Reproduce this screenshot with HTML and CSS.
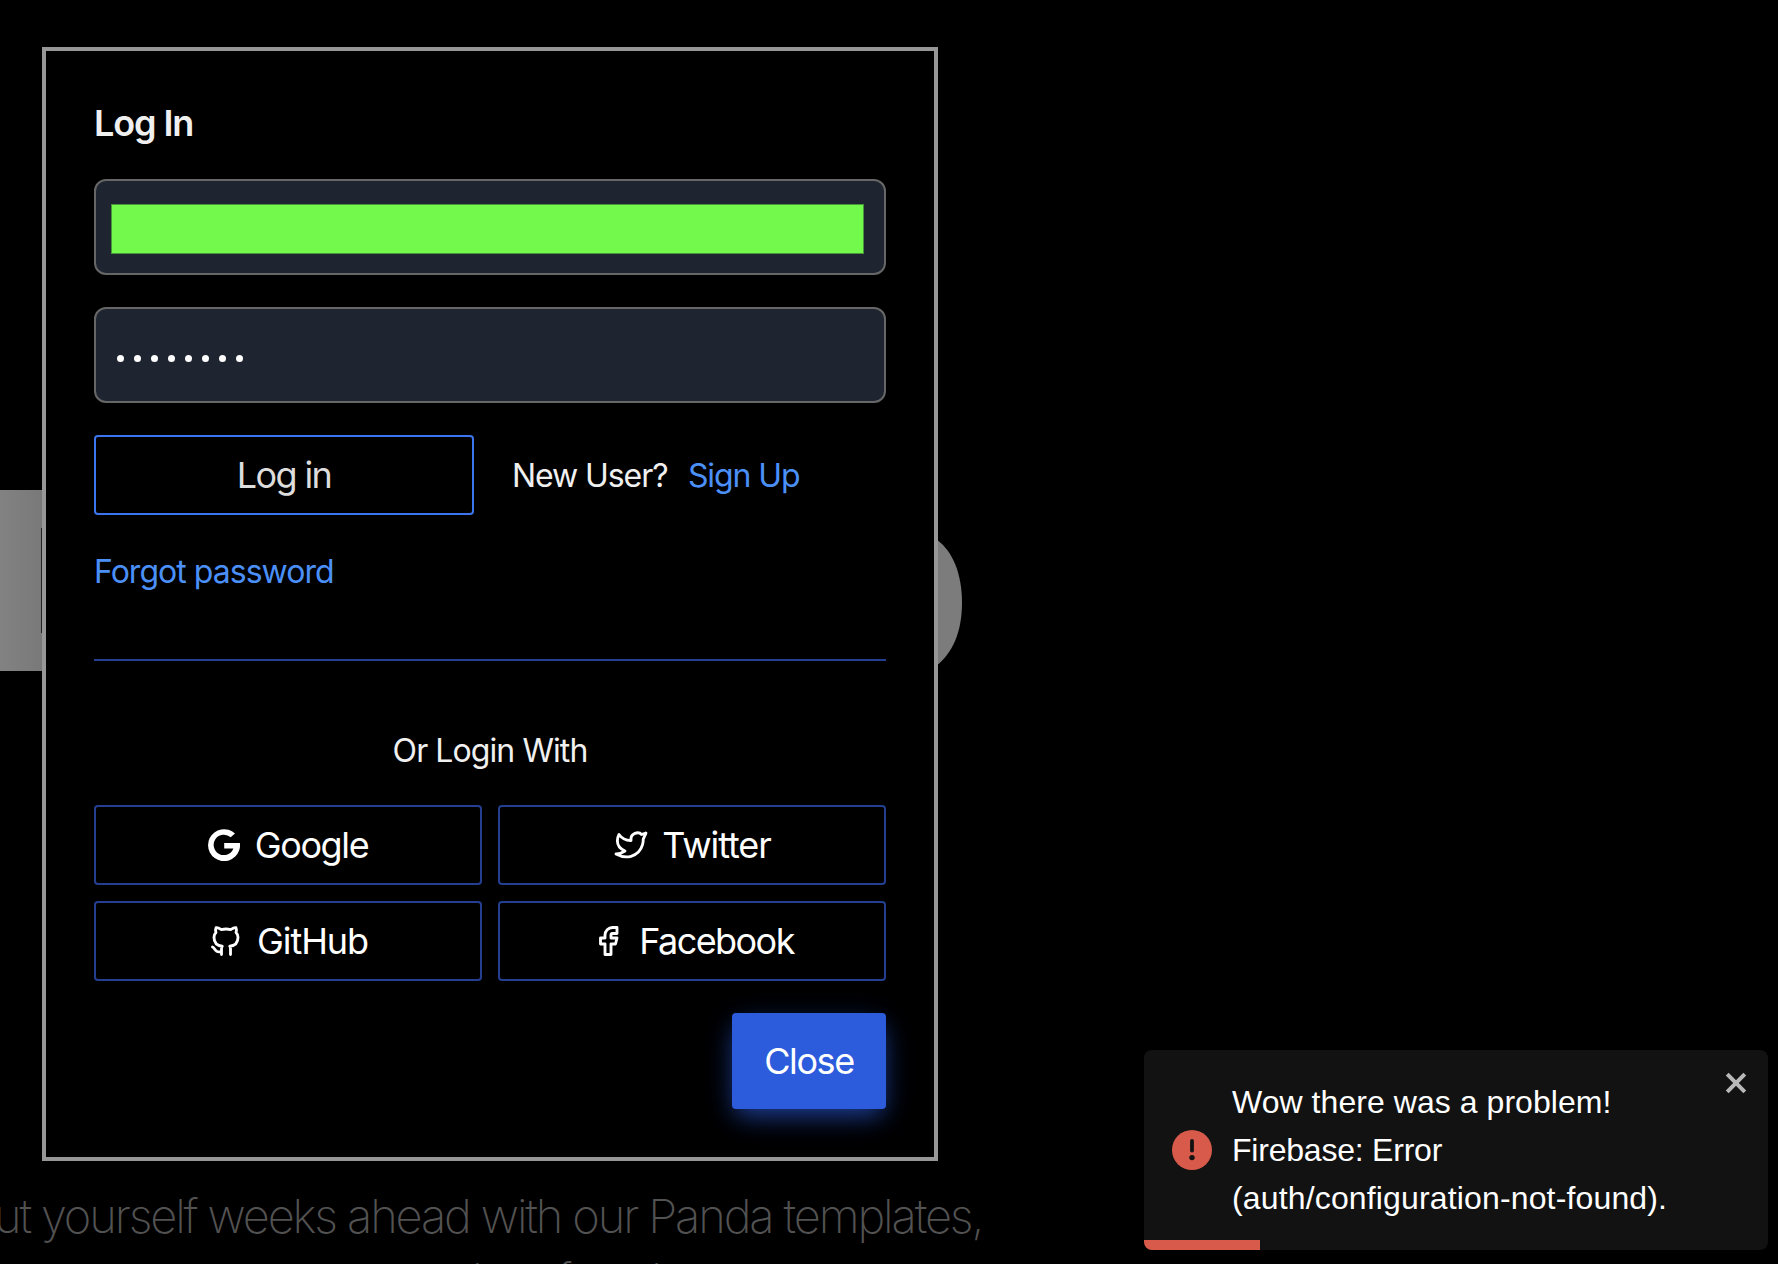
FILE: index.html
```html
<!DOCTYPE html>
<html lang="en">
<head>
<meta charset="utf-8">
<title>Log In</title>
<link rel="stylesheet" href="styles.css">
</head>
<body>
<div class="hero">
  <svg class="hero-art" width="980" height="190" viewBox="0 0 980 190" aria-hidden="true">
    <defs><linearGradient id="fade"><stop offset="0" stop-color="#828282"/><stop offset="1" stop-color="#797979"/></linearGradient></defs>
    <rect x="0" y="0" width="42" height="181" fill="url(#fade)"/>
    <rect x="41" y="38" width="1" height="105" fill="#222"/>
    <path d="M936 49C953 61 962 84 962 113C962 141 953 163 936 176Z" fill="#7c7c7c"/>
  </svg>
  <p class="tagline"><span class="line first">ut yourself weeks ahead with our Panda templates,</span><span class="line second">here found</span></p>
</div>

<main class="modal">
  <h1 class="title">Log In</h1>
  <div class="field"><div class="redacted"></div></div>
  <div class="field password"><i></i><i></i><i></i><i></i><i></i><i></i><i></i><i></i></div>
  <div class="submit-row">
    <button class="btn login"><span>Log in</span></button>
    <span class="new-user">New User?</span>
    <a class="link signup">Sign Up</a>
  </div>
  <div class="forgot-row"><a class="link forgot">Forgot password</a></div>
  <p class="or"><span>Or Login With</span></p>
  <div class="providers">
    <button class="btn google"><svg class="icon" viewBox="0 0 32 32"><path d="M27 4.500A16 16 0 1 0 31.900 14H16.200V19.500H25.400A10.200 10.200 0 1 1 22.700 8.300Z" fill="#fff"/></svg><span>Google</span></button>
    <button class="btn twitter"><svg class="icon line-icon" viewBox="0 0 24 24"><path d="M22 4.010c-1 .49-1.980.689-3 .99-1.121-1.265-2.783-1.335-4.380-.737S11.977 6.323 12 8v1c-3.245.083-6.135-1.395-8-4 0 0-4.182 7.433 4 11-1.872 1.247-3.739 2.088-6 2 3.308 1.803 6.913 2.423 10.034 1.517 3.580-1.040 6.522-3.723 7.651-7.742a13.840 13.840 0 0 0 .497-3.753C20.180 7.773 21.692 5.250 22 4.009z"/></svg><span>Twitter</span></button>
    <button class="btn github"><svg class="icon line-icon" viewBox="0 0 24 24"><path d="M9 19c-4.300 1.400-4.300-2.500-6-3m12 5v-3.500c0-1 .1-1.400-.5-2 2.800-.3 5.500-1.400 5.500-6a4.600 4.600 0 0 0-1.300-3.200 4.200 4.200 0 0 0-.1-3.200s-1.100-.3-3.500 1.300a12.300 12.300 0 0 0-6.200 0C6.500 2.800 5.400 3.100 5.400 3.100a4.200 4.200 0 0 0-.1 3.200A4.600 4.600 0 0 0 4 9.500c0 4.600 2.700 5.700 5.500 6-.6.6-.6 1.200-.5 2V21"/></svg><span>GitHub</span></button>
    <button class="btn facebook"><svg class="icon line-icon" viewBox="0 0 24 24"><path d="M7 10v4h3v7h4v-7h3l1-4h-4V8a1 1 0 0 1 1-1h3V3h-3a5 5 0 0 0-5 5v2H7z"/></svg><span>Facebook</span></button>
  </div>
  <div class="footer"><button class="close-btn">Close</button></div>
</main>

<aside class="toast" role="alert">
  <svg class="toast-icon" viewBox="0 0 40 40"><circle cx="20" cy="20" r="20" fill="#d75a4a"/><path d="M20 11v9.500" stroke="#121212" stroke-width="3.800" stroke-linecap="round"/><circle cx="20" cy="27.600" r="2.700" fill="#121212"/></svg>
  <p class="toast-text"><span class="t1">Wow there was a problem!</span><br><span class="t2">Firebase: Error</span><br><span class="t3">(auth/configuration-not-found).</span></p>
  <svg class="toast-close" viewBox="0 0 22 22"><path d="M2.200 2.200L19.800 19.800M19.800 2.200L2.200 19.800" stroke="#b8b8b8" stroke-width="4"/></svg>
  <div class="progress"></div>
</aside>
</body>
</html>
```
FILE: styles.css
```css
* { box-sizing: border-box; }
body {
  margin: 0;
  height: 1264px;
  overflow: hidden;
  position: relative;
  background: #000;
  color: #f0f0f0;
  font-family: Inter, "Liberation Sans", sans-serif;
}
button { font: inherit; color: #fff; padding: 0; }
h1, p { margin: 0; }
span, a { white-space: nowrap; }

.hero { height: 1264px; padding-top: 490px; overflow: hidden; }
.hero-art { display: block; }
.tagline {
  display: flex;
  flex-direction: column;
  margin-top: 504px;
  font-size: 47px;
  line-height: 64px;
  font-weight: 200;
  letter-spacing: -2.130px;
  color: #525252;
}
.line { display: block; }
.first { margin-left: -6px; }
.second { padding-left: 472px; letter-spacing: -5px; }

.modal {
  position: absolute;
  left: 42px;
  top: 47px;
  width: 896px;
  height: 1114px;
  padding: 48px;
  border: 4px solid #979797;
  background: #000;
  display: flex;
  flex-direction: column;
}
.title { height: 48px; line-height: 48px; font-size: 36px; font-weight: 600; letter-spacing: -1.100px; }
.field {
  height: 96px;
  margin-top: 32px;
  border: 2px solid #666;
  border-radius: 12px;
  background: #1f2431;
}
.redacted {
  width: 753px;
  height: 50px;
  margin: 23px 0 0 15px;
  background: #73f94b;
  border: 1px solid #48963a;
}
.password { display: flex; align-items: center; gap: 10.050px; padding: 7px 0 0 20.500px; }
.password i { width: 7px; height: 7px; border-radius: 50%; background: #fff; }

.submit-row { display: flex; align-items: center; height: 80px; margin-top: 32px; font-size: 32px; }
.btn {
  display: flex;
  align-items: center;
  justify-content: center;
  height: 80px;
  background: transparent;
  border: 2px solid #243f8f;
  border-radius: 4px;
  font-size: 36px;
}
.login { width: 380px; border-color: #3b76f0; color: #ddd; letter-spacing: -1.600px; }
.new-user { margin-left: 38px; letter-spacing: -1.080px; }
.link { color: #4b90f8; }
.signup { margin-left: 20.500px; letter-spacing: -1.100px; }
.forgot-row { height: 146px; padding-top: 33px; border-bottom: 2px solid #243f8f; font-size: 32px; line-height: 48px; }
.forgot { letter-spacing: -.97px; }
.or { height: 48px; margin-top: 66px; text-align: center; font-size: 32px; line-height: 48px; letter-spacing: -.92px; }
.providers { display: grid; grid-template-columns: 1fr 1fr; gap: 16px; margin-top: 30px; }
.google { letter-spacing: -1.350px; }
.twitter { letter-spacing: -1.100px; }
.github { letter-spacing: -1.050px; }
.facebook { letter-spacing: -1.550px; }
.icon { width: 32px; height: 32px; margin-right: 15px; }
.line-icon { width: 36px; height: 36px; margin-right: 13px; fill: none; stroke: #fff; stroke-width: 1.900; stroke-linecap: round; stroke-linejoin: round; }
.footer { display: flex; justify-content: flex-end; margin-top: 32px; }
.close-btn {
  width: 154px;
  height: 96px;
  border: 0;
  border-radius: 4px;
  background: #2c5cdc;
  font-size: 36px;
  letter-spacing: -1.400px;
  box-shadow: 0 10px 22px -5px rgba(44, 92, 220, .6), 0 8px 36px -2px rgba(44, 92, 220, .25);
}

.toast {
  position: absolute;
  left: 1144px;
  top: 1050px;
  width: 624px;
  height: 200px;
  display: flex;
  align-items: center;
  padding-left: 28px;
  overflow: hidden;
  border-radius: 8px;
  background: #121212;
}
.toast-icon { width: 40px; height: 40px; margin-right: 20px; }
.toast-text { font: 32px/48px "Liberation Sans", Arial, sans-serif; color: #fff; }
.t1 { letter-spacing: .05px; }
.t2 { letter-spacing: -.22px; }
.t3 { letter-spacing: .15px; }
.toast-close { position: absolute; right: 21px; top: 22px; width: 22px; height: 22px; }
.progress { position: absolute; left: 0; bottom: 0; width: 116px; height: 10px; background: #d75a4a; }
```
